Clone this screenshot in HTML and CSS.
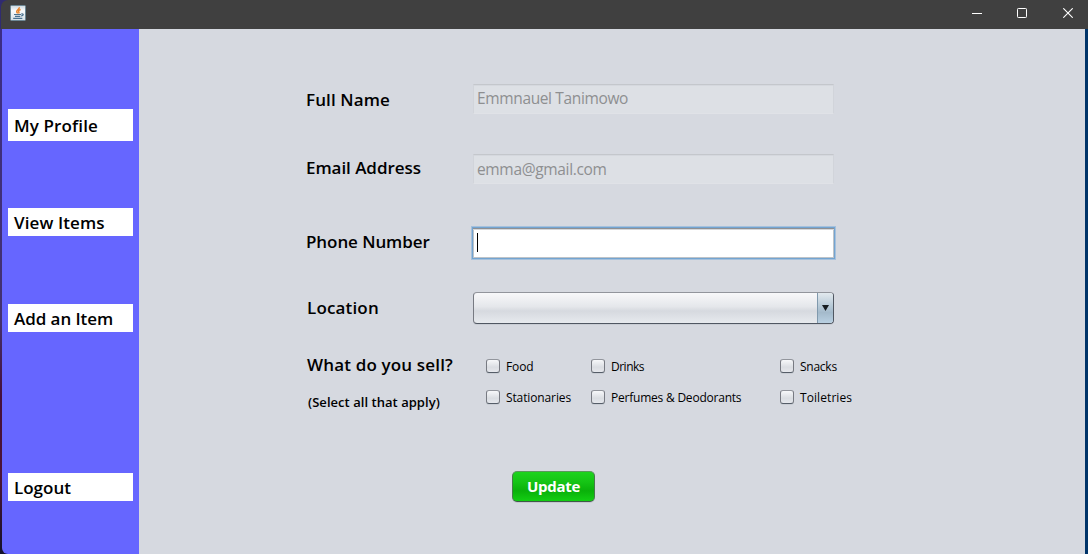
FILE: index.html
```html
<!DOCTYPE html>
<html lang="en">
<head>
<meta charset="utf-8">
<title>My Profile</title>
<link rel="stylesheet" href="styles.css">
</head>
<body>
<div class="window">
  <header class="titlebar">
    <svg class="app-icon" width="16" height="16" viewBox="0 0 16 16">
      <defs><linearGradient id="tile" x2="0" y2="1"><stop stop-color="#cbd8df"/><stop offset=".35" stop-color="#fafbfc"/><stop offset="1" stop-color="#d5e0e8"/></linearGradient></defs>
      <rect x=".5" y=".5" width="15" height="15" rx="1" fill="url(#tile)" stroke="#6c8794"/>
      <path d="M9.200 2.200C10 4 6.400 4.800 6.700 6.600 6.800 7.400 7.500 7.800 7.700 8.500M10.600 4.500C8.500 5.200 8 6 8.800 6.800 9.200 7.400 9 8 8.500 8.300" fill="none" stroke="#e8862e" stroke-width="1.500"/>
      <path d="M4 9.500H11M5 11.300H10.300M3.200 13.400H12.300M11.300 8.900C14 8.300 13.800 10.800 11 11" fill="none" stroke="#4b7290" stroke-width="1.200"/>
    </svg>
    <div class="controls">
      <svg width="10" height="10" viewBox="0 0 10 10"><path d="M0 5.500H10" stroke="#fff"/></svg>
      <svg width="10" height="10" viewBox="0 0 10 10"><rect x=".5" y=".5" width="9" height="9" rx=".8" fill="none" stroke="#fff"/></svg>
      <svg class="close" width="10" height="10" viewBox="0 0 10 10"><path d="M.3 .3 9.700 9.700M9.700 .3 .3 9.700" stroke="#fff" stroke-width="1.100"/></svg>
    </div>
  </header>
  <div class="body">
    <nav class="sidebar">
      <a class="nav-item profile">My Profile</a>
      <a class="nav-item view">View Items</a>
      <a class="nav-item add">Add an Item</a>
      <a class="nav-item logout">Logout</a>
    </nav>
    <main class="content">
      <div class="row name-row"><label class="label l-name">Full Name</label><div class="field disabled v-name">Emmnauel Tanimowo</div></div>
      <div class="row email-row"><label class="label l-email">Email Address</label><div class="field disabled v-email">emma@gmail.com</div></div>
      <div class="row phone-row"><label class="label l-phone">Phone Number</label><div class="field focused"><span class="caret"></span></div></div>
      <div class="row location-row"><label class="label l-location">Location</label><div class="combo"><span class="combo-arrow"><svg width="7" height="6" viewBox="0 0 7 6"><path d="M0 0H7L3.500 6Z" fill="#171c20"/></svg></span></div></div>
      <div class="sell">
        <div class="sell-text"><span class="label l-sell">What do you sell?</span><span class="hint">(Select all that apply)</span></div>
        <div class="options">
          <span class="option"><i class="box"></i><span class="o-food">Food</span></span>
          <span class="option"><i class="box"></i><span class="o-drinks">Drinks</span></span>
          <span class="option"><i class="box"></i><span class="o-snacks">Snacks</span></span>
          <span class="option"><i class="box"></i><span class="o-stat">Stationaries</span></span>
          <span class="option"><i class="box"></i><span class="o-perf">Perfumes &amp; Deodorants</span></span>
          <span class="option"><i class="box"></i><span class="o-toil">Toiletries</span></span>
        </div>
      </div>
      <div class="update">Update</div>
    </main>
  </div>
</div>
</body>
</html>
```

FILE: styles.css
```css
* { box-sizing: border-box; }
body { margin: 0; font-family: "Open Sans", "Noto Sans", sans-serif; color: #000; overflow: hidden; }
.window { width: 1088px; height: 554px; display: flex; flex-direction: column; background: #302b70; }
.titlebar { height: 29px; flex: none; margin-left: 1px; border-top-left-radius: 7px; background: #404040; display: flex; justify-content: space-between; padding: 5px 15px 0 9px; }
.app-icon { display: block; }
.controls { display: flex; gap: 35px; padding-top: 3px; }
.controls svg { display: block; }
.controls .close { margin-left: 1px; }
.body { flex: 1; display: flex; padding: 0 3px 0 2px; background: linear-gradient(#003469, #003469) right / 3px 100% no-repeat, linear-gradient(#3b2d86, #43316f 55%, #45103c 70%, #4b1436 85%, #14122c); }
.sidebar { width: 137px; background: #66f; padding: 80px 6px 0; border-bottom-left-radius: 6px; }
.nav-item { display: block; height: 28px; padding: 1px 0 0 6px; background: #fff; font-size: 17px; font-weight: 600; line-height: 28px; white-space: nowrap; }
.profile { height: 32px; line-height: 32px; letter-spacing: .12px; }
.view { margin-top: 67px; letter-spacing: .1px; }
.add { margin-top: 68px; letter-spacing: -.06px; }
.logout { margin-top: 141px; }
.content { flex: 1; padding: 55px 0 0 167px; background: #d6d9e0; }
.row { display: flex; align-items: center; }
.label { width: 167px; font-size: 17px; font-weight: 600; line-height: 24px; white-space: nowrap; }
.l-name { padding-top: 2px; letter-spacing: .12px; }
.l-email { padding-bottom: 2px; letter-spacing: -.05px; }
.l-phone { padding-bottom: 2px; letter-spacing: -.08px; }
.l-location { padding-left: 1px; letter-spacing: .16px; }
.field { width: 361px; height: 30px; font-size: 15.5px; line-height: 27px; white-space: nowrap; }
.v-name { letter-spacing: -.36px; }
.v-email { letter-spacing: -.34px; }
.disabled { background: #dde0e5; color: #8e8f91; border: 1px solid #d1d4da; border-top-color: #c4c7cc; border-bottom-color: #e0e2e7; box-shadow: inset 0 1px #d5d8de; padding-left: 3px; }
.email-row { margin-top: 40px; }
.email-row .field { line-height: 29px; }
.phone-row { margin-top: 43px; }
.focused { width: 363px; height: 32px; margin-left: -1px; border: 1px solid #73a4d1; background: #fff; box-shadow: inset 0 1px #8e9094, inset 0 2px #d7d8da, inset 0 0 0 1px #bec3c8, 0 0 0 1px #a6c1dc; padding: 5px 4px; }
.caret { display: block; width: 1px; height: 19px; background: #000; }
.location-row { margin-top: 33px; }
.combo { width: 361px; height: 32px; border: 1px solid #777a82; border-color: #92959c #505762 #505762 #777a82; border-radius: 4px; background: linear-gradient(#f8f8fa, #e5e7eb 45%, #d6d9df 60%, #e7eaee); display: flex; justify-content: flex-end; overflow: hidden; box-shadow: 0 1px #c9cdd4; }
.combo-arrow { width: 16px; border-left: 1px solid #8099ad; background: linear-gradient(#e2e9ee, #b5c8d6 45%, #a4bacb 65%, #b9d0e2); display: flex; align-items: center; justify-content: center; }
.sell { display: flex; margin-top: 27px; height: 64px; }
.sell-text { width: 180px; display: flex; flex-direction: column; padding-left: 1px; }
.l-sell { line-height: 28px; letter-spacing: .16px; }
.hint { font-size: 13px; font-weight: 600; line-height: 20px; margin-top: 13px; padding-left: 1px; letter-spacing: .04px; white-space: nowrap; }
.options { display: grid; grid-template-columns: 105px 189px 90px; grid-template-rows: 31px 31px; }
.option { display: flex; align-items: center; gap: 6px; font-size: 12px; font-weight: 500; line-height: 16px; white-space: nowrap; }
.o-food { letter-spacing: -.1px; }
.o-drinks { letter-spacing: -.5px; }
.o-snacks { letter-spacing: -.25px; }
.o-stat { letter-spacing: -.12px; }
.o-perf { letter-spacing: -.22px; }
.o-toil { letter-spacing: .08px; }
.box { width: 14px; height: 14px; margin-bottom: 2px; border: 1px solid #777a82; border-color: #92959c #777a82 #555d68; border-radius: 3px; background: linear-gradient(#f7f8fa, #dadde2 60%, #e6e8ed); box-shadow: 0 1px #c9cdd4; }
.update { width: 83px; height: 31px; margin: 56px 0 0 206px; border: 1px solid #547c56; border-color: #5a985b #477b4a #3f5848; border-radius: 5px; background: linear-gradient(#1dd31d, #15c415 35%, #0ab10a 65%, #13ce13); color: #fff; text-align: center; font-size: 15px; font-weight: 700; letter-spacing: -.3px; line-height: 29px; box-shadow: 0 1px #c3c7ce; }
```
